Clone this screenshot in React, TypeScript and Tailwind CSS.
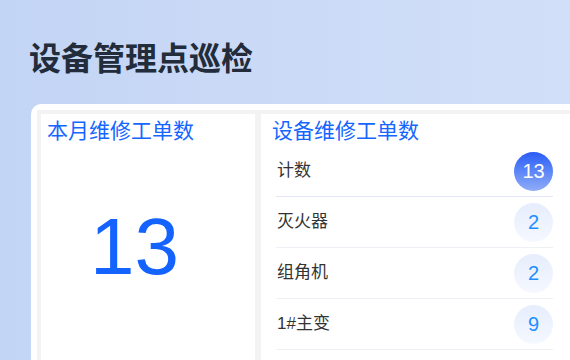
const rows = [
    { name: "计数", count: 13, primary: true },
    { name: "灭火器", count: 2 },
    { name: "组角机", count: 2 },
    { name: "1#主变", count: 9 },
]

const App = () => {
    return (
        <div
            className="w-[570px] h-[360px] overflow-hidden bg-linear-to-r from-[#c3d5f5] to-[#d2dff8] pl-[31px] pt-[40px]"
            style={{ fontFamily: '"Liberation Sans", "Noto Sans CJK SC", sans-serif' }}
        >
            {/* header */}
            <h1
                className="text-[32px] leading-[32px] font-bold text-[#222c3a] -ml-[2px]"
                style={{ fontFamily: '"Noto Sans CJK SC", sans-serif' }}
            >
                设备管理点巡检
            </h1>

            {/* panel */}
            <div className="mt-[32px] w-[560px] h-[300px] bg-white rounded-tl-[10px] pl-[6px] pt-[6px]">
                <div className="w-full h-full bg-[#f3f3f4] pl-[4px] pt-[4px] flex flex-row gap-[6px]">

                    {/* left card */}
                    <div className="w-[214px] h-full bg-white flex flex-col">
                        <h3 className="pl-[6px] pt-[4px] text-[21px] leading-[26px] text-[#1565ff]">本月维修工单数</h3>
                        <div className="mt-[63px] pl-[49px] text-[80px] leading-[80px] text-[#1463ff]">13</div>
                    </div>

                    {/* right card */}
                    <div className="w-[310px] h-full bg-white flex flex-col">
                        <h3 className="pl-[11px] pt-[4px] text-[21px] leading-[26px] text-[#1565ff]">设备维修工单数</h3>
                        <ul className="mt-[2px] pl-[15px] pr-[18px] flex flex-col">
                            {rows.map((row, index) => (
                                <li
                                    key={row.name}
                                    className={
                                        "h-[51px] flex flex-row items-center justify-between border-b " +
                                        (index === 0 ? "border-[#e3e5fb]" : "border-[#eff0f6]")
                                    }
                                >
                                    <span className="pl-[1px] text-[17px] text-[#333333]">{row.name}</span>
                                    {
                                        row.primary ?
                                        <span className="w-[39px] h-[39px] rounded-full bg-linear-to-b from-[#2a5bf5] to-[#90abf7] flex items-center justify-center text-[20px] text-white">
                                            {row.count}
                                        </span>
                                        :
                                        <span className="w-[39px] h-[39px] rounded-full bg-linear-to-b from-[#e6edfc] to-[#f5f8ff] flex items-center justify-center text-[20px] text-[#1f8fff]">
                                            {row.count}
                                        </span>
                                    }
                                </li>
                            ))}
                        </ul>
                    </div>
                </div>
            </div>
        </div>
    )
}

export default App
